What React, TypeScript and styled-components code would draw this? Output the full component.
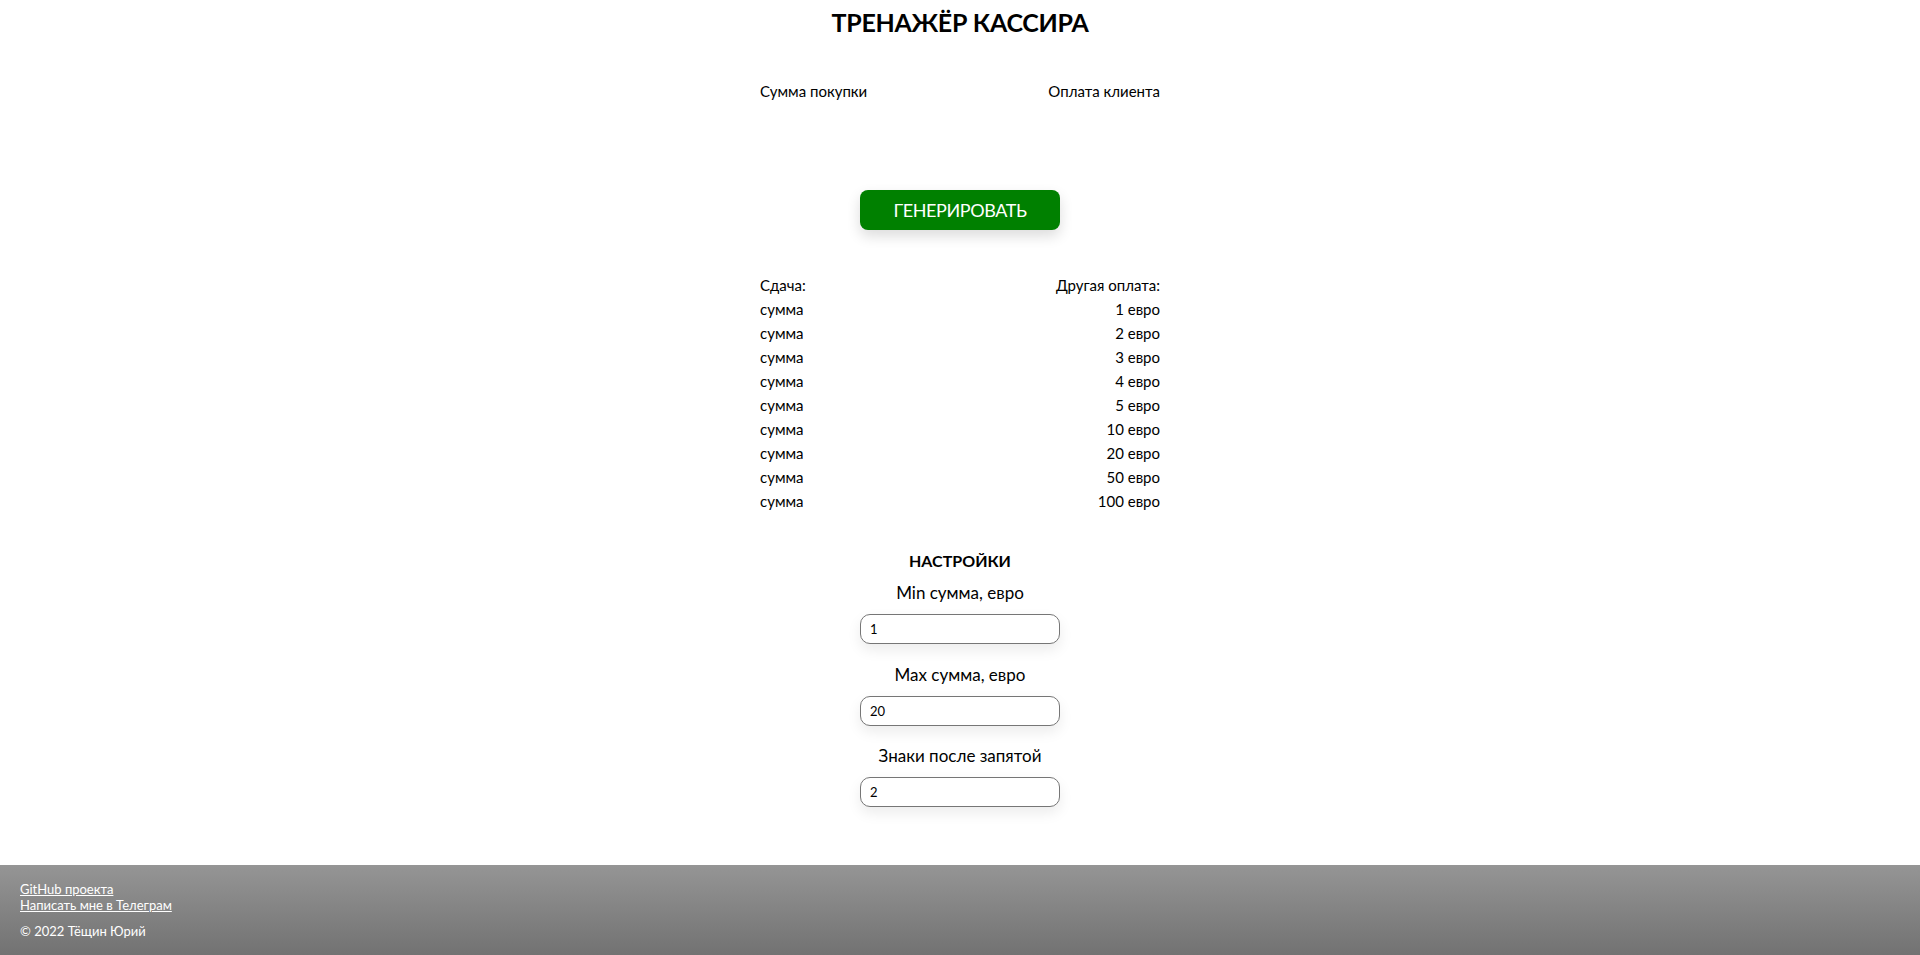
import styled, { createGlobalStyle } from 'styled-components'

const GlobalStyle = createGlobalStyle`
  html, body {
    margin: 0;
    padding: 0;
    background: #fff;
    color: #000;
    font-family: Lato, 'Open Sans', sans-serif;
  }
`

const Page = styled.div`
  min-height: 100vh;
  display: flex;
  flex-direction: column;
`

const Main = styled.main`
  flex: 1;
  width: 400px;
  margin: 0 auto;
  display: flex;
  flex-direction: column;
  align-items: center;
`

const Title = styled.h1`
  margin: 2px 0 0;
  font-size: 25px;
  line-height: 40px;
  font-weight: 700;
  letter-spacing: -0.3px;
`

const Row = styled.div<{ $top?: number }>`
  width: 100%;
  display: flex;
  justify-content: space-between;
  font-size: 15px;
  line-height: 24px;
  margin-top: ${(p) => p.$top ?? 0}px;
`

const GenerateButton = styled.button`
  margin-top: 87px;
  width: 200px;
  height: 40px;
  border: none;
  border-radius: 8px;
  background: #008000;
  color: #fff;
  font-family: Lato, 'Open Sans', sans-serif;
  font-size: 18px;
  letter-spacing: -0.4px;
  box-shadow: 0 6px 14px rgba(0, 0, 0, 0.14);
  cursor: pointer;
`

const Table = styled.div`
  width: 100%;
  margin-top: 43px;
`

const SettingsTitle = styled.h3`
  margin: 36px 0 0;
  font-size: 16px;
  line-height: 24px;
  font-weight: 700;
`

const Field = styled.div<{ $top: number }>`
  display: flex;
  flex-direction: column;
  align-items: center;
  margin-top: ${(p) => p.$top}px;
`

const FieldLabel = styled.label`
  font-size: 17px;
  line-height: 24px;
`

const Input = styled.input`
  box-sizing: border-box;
  margin-top: 9px;
  width: 200px;
  height: 30px;
  padding: 0 9px;
  border: 1px solid #767676;
  border-radius: 10px;
  font-family: Lato, 'Open Sans', sans-serif;
  font-size: 13px;
  color: #000;
  box-shadow: 0 6px 14px rgba(0, 0, 0, 0.08);
  outline: none;
`

const Footer = styled.footer`
  height: 90px;
  box-sizing: border-box;
  padding: 16px 20px 0;
  background: linear-gradient(#959595, #727272);
  color: #fff;
  font-size: 13px;
  line-height: 16px;
`

const FooterLink = styled.a`
  display: block;
  color: #fff;
  text-decoration: underline;
`

const Copyright = styled.div`
  margin-top: 10px;
`

const bills = [1, 2, 3, 4, 5, 10, 20, 50, 100]

const settings = [
  { label: 'Min сумма, евро', value: '1', top: 8 },
  { label: 'Max сумма, евро', value: '20', top: 19 },
  { label: 'Знаки после запятой', value: '2', top: 18 },
]

export default function App() {
  return (
    <Page>
      <GlobalStyle />
      <Main>
        <Title>ТРЕНАЖЁР КАССИРА</Title>
        <Row $top={37}>
          <span>Сумма покупки</span>
          <span>Оплата клиента</span>
        </Row>
        <GenerateButton>ГЕНЕРИРОВАТЬ</GenerateButton>
        <Table>
          <Row>
            <span>Сдача:</span>
            <span>Другая оплата:</span>
          </Row>
          {bills.map((b) => (
            <Row key={b}>
              <span>сумма</span>
              <span>{b} евро</span>
            </Row>
          ))}
        </Table>
        <SettingsTitle>НАСТРОЙКИ</SettingsTitle>
        {settings.map((s) => (
          <Field key={s.label} $top={s.top}>
            <FieldLabel>{s.label}</FieldLabel>
            <Input defaultValue={s.value} />
          </Field>
        ))}
      </Main>
      <Footer>
        <FooterLink href="#">GitHub проекта</FooterLink>
        <FooterLink href="#">Написать мне в Телеграм</FooterLink>
        <Copyright>© 2022 Тёщин Юрий</Copyright>
      </Footer>
    </Page>
  )
}
